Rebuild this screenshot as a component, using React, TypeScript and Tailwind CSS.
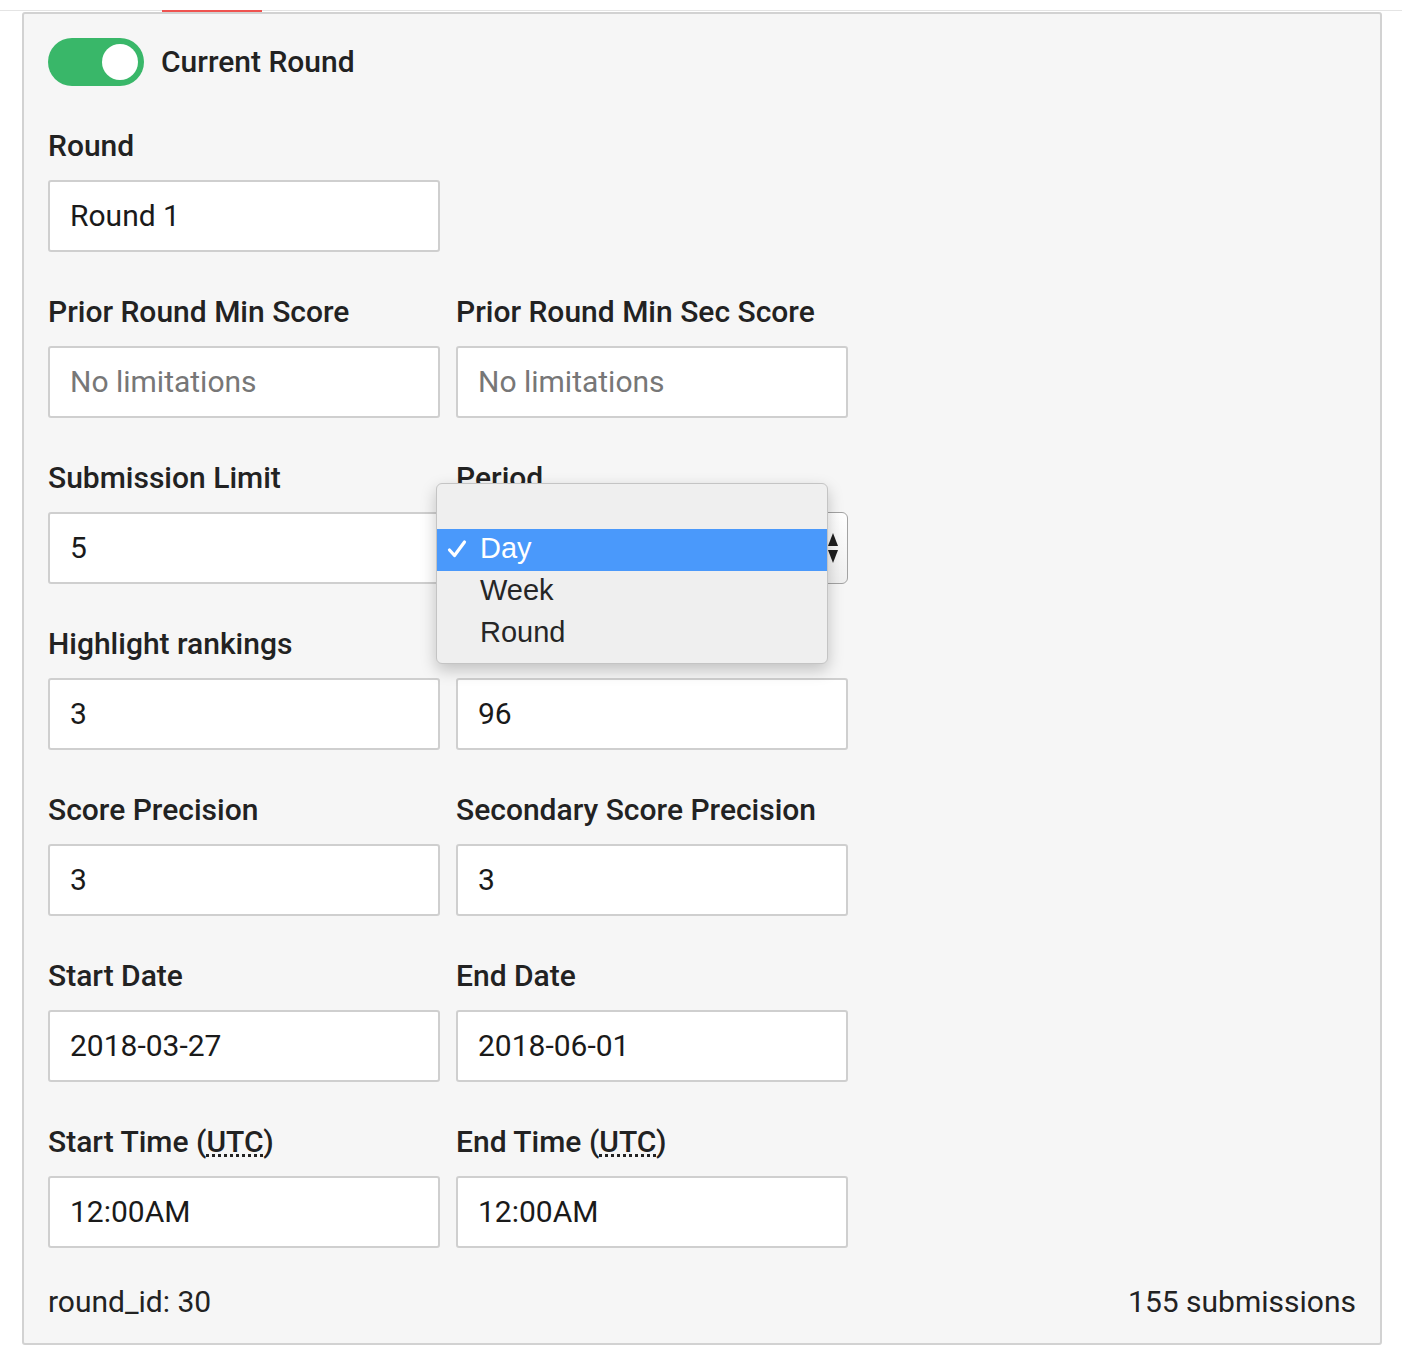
import React from 'react';

type Field = {
  label: React.ReactNode;
  value?: string;
  placeholder?: string;
};

const TextField: React.FC<Field> = ({ label, value, placeholder }) => (
  <div className="w-[392px]">
    <div className="h-[36px] text-[30px] leading-[34px] font-medium text-[#222222] mb-[15px] whitespace-nowrap">{label}</div>
    <div className="h-[72px] bg-white border-2 border-[#cfcfcf] rounded-[3px] pl-[20px] pb-[2px] flex items-center text-[30px]">
      {value ? (
        <span className="text-[#1a1a1a]">{value}</span>
      ) : (
        <span className="text-[#777777]">{placeholder}</span>
      )}
    </div>
  </div>
);

const Utc = () => (
  <>
    (<abbr title="Coordinated Universal Time">UTC</abbr>)
  </>
);

const PeriodField: React.FC = () => (
  <div className="w-[392px] relative">
    <div className="h-[36px] text-[30px] leading-[34px] font-medium text-[#222222] mb-[15px]">Period</div>
    <div className="h-[72px] rounded-[6px] border-[1.5px] border-[#a3a3a3] bg-gradient-to-b from-white to-[#efefef] flex items-center justify-end pr-[8px]">
      <svg width="12" height="30" viewBox="0 0 12 30">
        <polygon points="6,0 11,13 1,13" fill="#1f1f1f" />
        <polygon points="1,17 11,17 6,30" fill="#1f1f1f" />
      </svg>
    </div>
    {/* open native popup menu */}
    <div className="absolute left-[-20px] top-[22px] w-[392px] rounded-[6px] bg-[#efefef] border border-[#c4c4c4] shadow-[0_6px_16px_rgba(0,0,0,0.22)] pt-[3px] pb-[8px] font-['Liberation_Sans',sans-serif] text-[29px] text-[#262626] z-10">
      <div className="h-[42px]" />
      <div className="h-[42px] bg-[#4a99fb] text-white flex items-center pb-[2px]">
        <span className="w-[43px] pl-[10px] flex items-center">
          <svg width="20" height="20" viewBox="0 0 20 20">
            <path d="M2.5 11 L7.5 16.5 L17.5 3" fill="none" stroke="white" strokeWidth="3.2" strokeLinecap="round" strokeLinejoin="round" />
          </svg>
        </span>
        <span>Day</span>
      </div>
      <div className="h-[42px] flex items-center pl-[43px] pb-[2px]">Week</div>
      <div className="h-[42px] flex items-center pl-[43px] pb-[2px]">Round</div>
    </div>
  </div>
);

const App: React.FC = () => {
  return (
    <div className="min-h-screen bg-white font-['Roboto',sans-serif]">
      <div className="h-[10px]" />
      <div className="h-[1px] bg-[#e4e4e4]">
        <div className="ml-[162px] w-[100px] h-[2px] bg-[#ef5350]" />
      </div>
      <div className="ml-[22px] mr-[20px] mt-[1px] bg-[#f6f6f6] border-2 border-[#d2d2d2] rounded-[3px] px-6 pt-6 pb-[23px]">
        <div className="flex flex-col gap-[43px]">
          <div className="flex items-center gap-[17px]">
            <div className="w-[96px] h-[48px] rounded-full bg-[#39b769] flex items-center justify-end pr-[6px]">
              <div className="w-[36px] h-[36px] rounded-full bg-white" />
            </div>
            <span className="text-[30px] font-medium text-[#222222] pb-[2px]">Current Round</span>
          </div>

          <TextField label="Round" value="Round 1" />

          <div className="flex gap-[16px]">
            <TextField label="Prior Round Min Score" placeholder="No limitations" />
            <TextField label="Prior Round Min Sec Score" placeholder="No limitations" />
          </div>

          <div className="flex gap-[16px] relative z-10">
            <TextField label="Submission Limit" value="5" />
            <PeriodField />
          </div>

          <div className="flex gap-[16px]">
            <TextField label="Highlight rankings" value="3" />
            <TextField label="" value="96" />
          </div>

          <div className="flex gap-[16px]">
            <TextField label="Score Precision" value="3" />
            <TextField label="Secondary Score Precision" value="3" />
          </div>

          <div className="flex gap-[16px]">
            <TextField label="Start Date" value="2018-03-27" />
            <TextField label="End Date" value="2018-06-01" />
          </div>

          <div className="flex gap-[16px]">
            <TextField label={<>Start Time <Utc /></>} value="12:00AM" />
            <TextField label={<>End Time <Utc /></>} value="12:00AM" />
          </div>
        </div>

        <div className="mt-[36px] flex justify-between text-[30px] leading-[36px] text-[#222222]">
          <span>round_id: 30</span>
          <span>155 submissions</span>
        </div>
      </div>
    </div>
  );
};

export default App;
